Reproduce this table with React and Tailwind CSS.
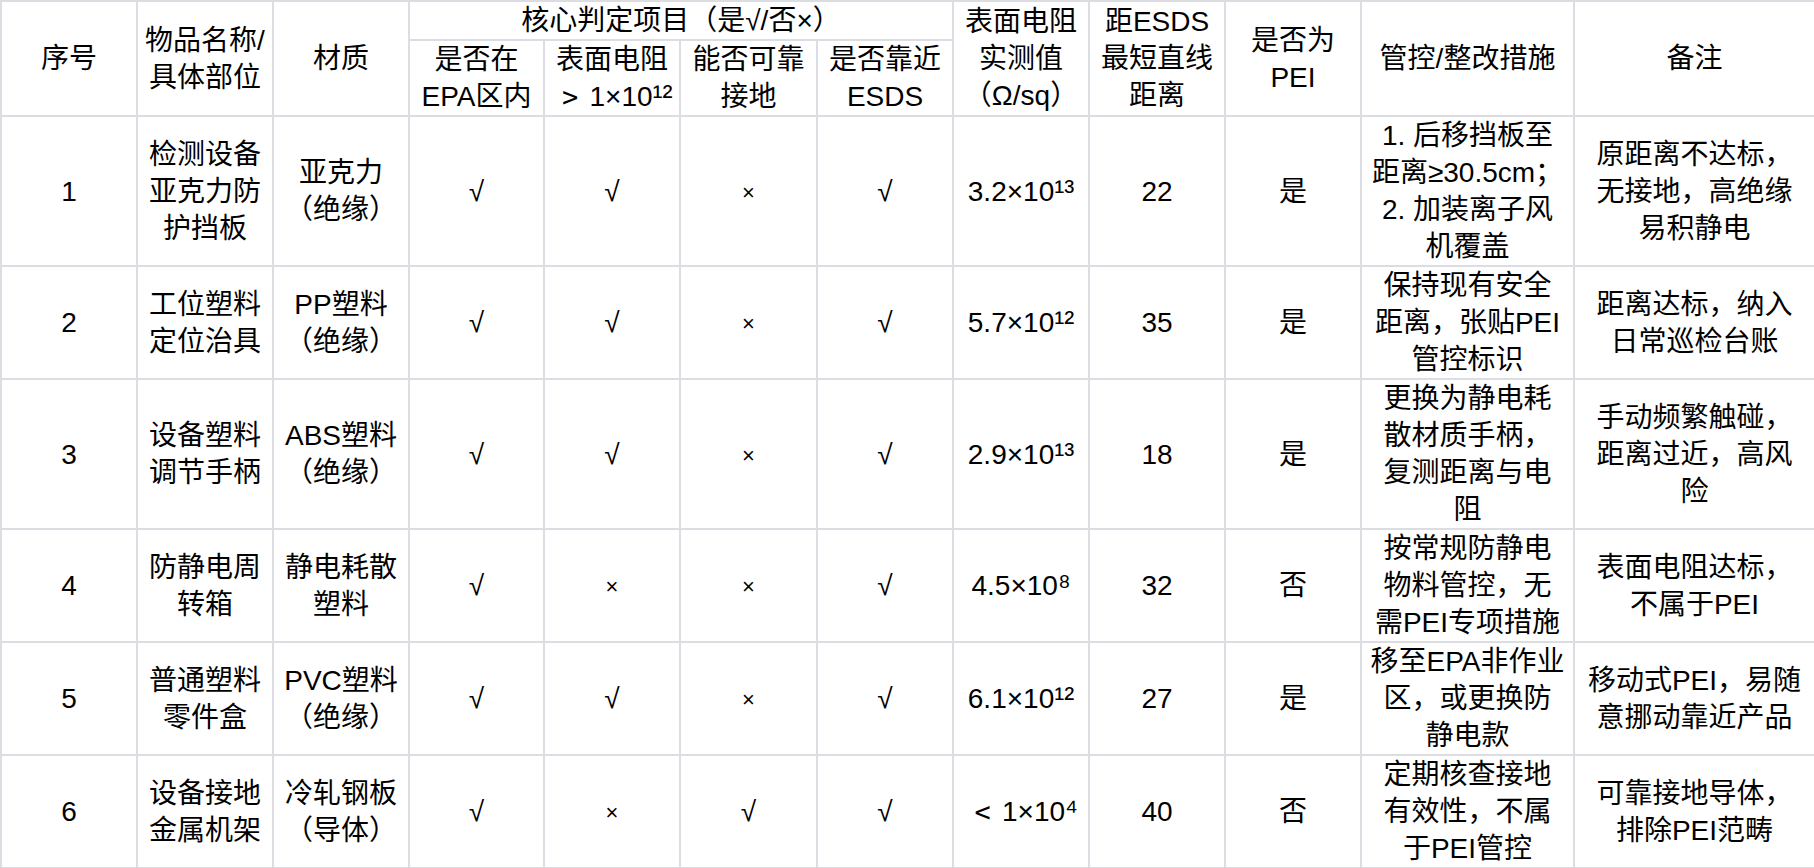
import React from "react";

const rows = [
  {
    no: "1",
    name: ["检测设备", "亚克力防", "护挡板"],
    mat: ["亚克力", "（绝缘）"],
    checks: ["√", "√", "×", "√"],
    base: "3.2×10",
    exp: "¹³",
    dist: "22",
    pei: "是",
    action: ["1. 后移挡板至", "距离≥30.5cm；", "2. 加装离子风", "机覆盖"],
    note: ["原距离不达标，", "无接地，高绝缘", "易积静电"],
    h: "h-[150px]",
  },
  {
    no: "2",
    name: ["工位塑料", "定位治具"],
    mat: ["PP塑料", "（绝缘）"],
    checks: ["√", "√", "×", "√"],
    base: "5.7×10",
    exp: "¹²",
    dist: "35",
    pei: "是",
    action: ["保持现有安全", "距离，张贴PEI", "管控标识"],
    note: ["距离达标，纳入", "日常巡检台账"],
    h: "h-[113px]",
  },
  {
    no: "3",
    name: ["设备塑料", "调节手柄"],
    mat: ["ABS塑料", "（绝缘）"],
    checks: ["√", "√", "×", "√"],
    base: "2.9×10",
    exp: "¹³",
    dist: "18",
    pei: "是",
    action: ["更换为静电耗", "散材质手柄，", "复测距离与电", "阻"],
    note: ["手动频繁触碰，", "距离过近，高风", "险"],
    h: "h-[150px]",
  },
  {
    no: "4",
    name: ["防静电周", "转箱"],
    mat: ["静电耗散", "塑料"],
    checks: ["√", "×", "×", "√"],
    base: "4.5×10",
    exp: "⁸",
    dist: "32",
    pei: "否",
    action: ["按常规防静电", "物料管控，无", "需PEI专项措施"],
    note: ["表面电阻达标，", "不属于PEI"],
    h: "h-[113px]",
  },
  {
    no: "5",
    name: ["普通塑料", "零件盒"],
    mat: ["PVC塑料", "（绝缘）"],
    checks: ["√", "√", "×", "√"],
    base: "6.1×10",
    exp: "¹²",
    dist: "27",
    pei: "是",
    action: ["移至EPA非作业", "区，或更换防", "静电款"],
    note: ["移动式PEI，易随", "意挪动靠近产品"],
    h: "h-[113px]",
  },
  {
    no: "6",
    name: ["设备接地", "金属机架"],
    mat: ["冷轧钢板", "（导体）"],
    checks: ["√", "×", "√", "√"],
    sign: "﹤",
    base: "1×10",
    exp: "⁴",
    dist: "40",
    pei: "否",
    action: ["定期核查接地", "有效性，不属", "于PEI管控"],
    note: ["可靠接地导体，", "排除PEI范畴"],
    h: "h-[113px]",
  },
];

const Lines = ({ lines }) => (
  <>
    {lines.map((l, i) => (
      <div key={i} className="whitespace-nowrap">
        {l}
      </div>
    ))}
  </>
);

// superscript digits a bit larger than the font's own glyphs
const Sup = ({ children }) => (
  <span className="text-[30px] leading-[0]">{children}</span>
);

const Sign = ({ children }) => (
  <span className="text-[38px] leading-[0]">{children}</span>
);

const cell = "border-2 border-[#dcdde2] text-center align-middle px-0 py-0";

export default function App() {
  return (
    <div className="w-[1814px] h-[868px] bg-white text-black font-['Liberation_Sans','Noto_Sans_CJK_SC',sans-serif] text-[28px] leading-[37px]">
      <table className="table-fixed border-collapse w-[1814px]">
        <colgroup>
          <col className="w-[136px]" />
          <col className="w-[136px]" />
          <col className="w-[136px]" />
          <col className="w-[135px]" />
          <col className="w-[136px]" />
          <col className="w-[137px]" />
          <col className="w-[136px]" />
          <col className="w-[136px]" />
          <col className="w-[136px]" />
          <col className="w-[136px]" />
          <col className="w-[213px]" />
          <col className="w-[241px]" />
        </colgroup>
        <thead>
          <tr className="h-[38px]">
            <th rowSpan={2} className={`${cell} font-normal`}>序号</th>
            <th rowSpan={2} className={`${cell} font-normal`}>
              <Lines lines={["物品名称/", "具体部位"]} />
            </th>
            <th rowSpan={2} className={`${cell} font-normal`}>材质</th>
            <th colSpan={4} className={`${cell} font-normal`}>
              核心判定项目（是√/否×）
            </th>
            <th rowSpan={2} className={`${cell} font-normal`}>
              <Lines lines={["表面电阻", "实测值", "（Ω/sq）"]} />
            </th>
            <th rowSpan={2} className={`${cell} font-normal`}>
              <Lines lines={["距ESDS", "最短直线", "距离"]} />
            </th>
            <th rowSpan={2} className={`${cell} font-normal`}>
              <Lines lines={["是否为", "PEI"]} />
            </th>
            <th rowSpan={2} className={`${cell} font-normal`}>管控/整改措施</th>
            <th rowSpan={2} className={`${cell} font-normal`}>备注</th>
          </tr>
          <tr className="h-[76px]">
            <th className={`${cell} font-normal`}>
              <Lines lines={["是否在", "EPA区内"]} />
            </th>
            <th className={`${cell} font-normal`}>
              <div>表面电阻</div>
              <div className="whitespace-nowrap">
                <Sign>﹥</Sign>1×10<Sup>¹²</Sup>
              </div>
            </th>
            <th className={`${cell} font-normal`}>
              <Lines lines={["能否可靠", "接地"]} />
            </th>
            <th className={`${cell} font-normal`}>
              <Lines lines={["是否靠近", "ESDS"]} />
            </th>
          </tr>
        </thead>
        <tbody>
          {rows.map((r) => (
            <tr key={r.no} className={r.h}>
              <td className={cell}>{r.no}</td>
              <td className={cell}>
                <Lines lines={r.name} />
              </td>
              <td className={cell}>
                <Lines lines={r.mat} />
              </td>
              {r.checks.map((c, i) => (
                <td key={i} className={cell}>
                  {c === "×" ? <span className="text-[22px]">×</span> : c}
                </td>
              ))}
              <td className={`${cell} whitespace-nowrap`}>
                {r.sign && <Sign>{r.sign}</Sign>}
                {r.base}
                <Sup>{r.exp}</Sup>
              </td>
              <td className={cell}>{r.dist}</td>
              <td className={cell}>{r.pei}</td>
              <td className={cell}>
                <Lines lines={r.action} />
              </td>
              <td className={cell}>
                <Lines lines={r.note} />
              </td>
            </tr>
          ))}
        </tbody>
      </table>
    </div>
  );
}
